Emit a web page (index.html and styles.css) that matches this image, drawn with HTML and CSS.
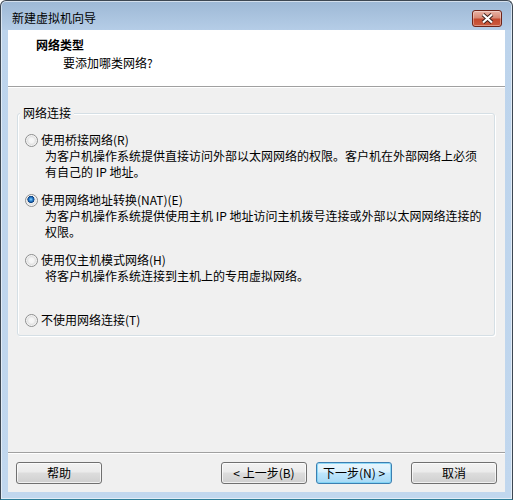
FILE: index.html
```html
<!DOCTYPE html>
<html lang="zh-CN">
<head>
<meta charset="utf-8">
<title>新建虚拟机向导</title>
<link rel="stylesheet" href="styles.css">
</head>
<body>
<div class="window">
  <div class="titlebar">
    <span class="title">新建虚拟机向导</span>
    <span class="close" role="button" aria-label="关闭">
      <svg width="13" height="11" viewBox="0 0 13 11">
        <path d="M2 1.5 L11 9.5 M11 1.5 L2 9.5" stroke="#3b1f1a" stroke-width="4" fill="none"/>
        <path d="M2 1.5 L11 9.5 M11 1.5 L2 9.5" stroke="#ffffff" stroke-width="2.2" fill="none"/>
      </svg>
    </span>
  </div>
  <div class="client">
    <div class="header">
      <div class="h-title">网络类型</div>
      <div class="h-sub">要添加哪类网络?</div>
    </div>
    <div class="body">
      <fieldset class="group">
        <legend>网络连接</legend>
        <div class="options">
          <div class="opt">
            <div class="opt-label"><span class="radio"></span>使用桥接网络(R)</div>
            <div class="desc">为客户机操作系统提供直接访问外部以太网网络的权限。客户机在外部网络上必须<br>有自己的 IP 地址。</div>
          </div>
          <div class="opt">
            <div class="opt-label"><span class="radio checked"></span>使用网络地址转换(NAT)(E)</div>
            <div class="desc">为客户机操作系统提供使用主机 IP 地址访问主机拨号连接或外部以太网网络连接的<br>权限。</div>
          </div>
          <div class="opt">
            <div class="opt-label"><span class="radio"></span>使用仅主机模式网络(H)</div>
            <div class="desc">将客户机操作系统连接到主机上的专用虚拟网络。</div>
          </div>
          <div class="opt">
            <div class="opt-label"><span class="radio"></span>不使用网络连接(T)</div>
          </div>
        </div>
      </fieldset>
    </div>
    <div class="footer">
      <span class="btn">帮助</span>
      <span class="btn btn-back">&lt; 上一步(B)</span>
      <span class="btn btn-next">下一步(N) &gt;</span>
      <span class="btn btn-cancel">取消</span>
    </div>
  </div>
</div>
</body>
</html>
```
FILE: styles.css
```css
* { box-sizing: border-box; }
html, body { margin: 0; padding: 0; }
body {
  width: 513px;
  height: 500px;
  overflow: hidden;
  font-family: "Noto Sans CJK SC", "Noto Sans", sans-serif;
  font-size: 12px;
  color: #000;
  background: #fff;
}
.window {
  width: 513px;
  height: 500px;
  display: flex;
  flex-direction: column;
  padding: 0 7px 7px;
  border: 1px solid #3d4752;
  border-bottom-color: #2f7f9a;
  border-radius: 6px 6px 0 0;
  background: linear-gradient(#9db8d5, #b5cde7 29px, #bdd4ec 29px, #c1d7ee);
  box-shadow: inset 0 0 0 1px rgba(255, 255, 255, 0.55);
}
.titlebar {
  height: 29px;
  display: flex;
  align-items: flex-start;
}
.title {
  margin: 10px 0 0 4px;
  line-height: 14px;
}
.close {
  margin: 9px 3px 0 auto;
  width: 30px;
  height: 17px;
  border: 1px solid #6e2419;
  border-radius: 3px;
  background: linear-gradient(#e9b4a6, #d88a76 45%, #c4492e 55%, #cc5c3f);
  box-shadow: inset 0 0 0 1px rgba(255, 255, 255, 0.35);
  display: flex;
  align-items: center;
  justify-content: center;
}
.close svg { display: block; }
.client {
  flex: 1;
  display: flex;
  flex-direction: column;
  background: #f0f0f0;
}
.header {
  height: 57px;
  background: #fff;
  border-bottom: 1px solid #a0a0a0;
  padding: 7px 0 0 28px;
}
.h-title {
  font-weight: bold;
  line-height: 16px;
}
.h-sub {
  margin-top: 2px;
  padding-left: 27px;
  line-height: 16px;
}
.body {
  flex: 1;
  border-top: 1px solid #fff;
  padding: 18px 10px 0 9px;
}
.group {
  margin: 0;
  min-width: 0;
  padding: 12px 0 7px 0;
  border: 1px solid #d5dfe5;
  border-radius: 3px;
  box-shadow: inset 1px 1px 0 #fff, 1px 1px 0 #fff;
}
.group legend {
  margin-left: 2px;
  padding: 0 3px;
  line-height: 14px;
  background: #f0f0f0;
}
.options {
  display: grid;
  grid-template-rows: repeat(3, 60px) auto;
  padding-left: 7px;
}
.opt-label {
  display: flex;
  align-items: center;
  gap: 3px;
  height: 16px;
  line-height: 16px;
  white-space: nowrap;
}
.desc {
  margin-left: 20px;
  line-height: 16px;
  white-space: nowrap;
}
.radio {
  flex: none;
  width: 13px;
  height: 13px;
  border-radius: 50%;
  border: 1px solid #8d8e8e;
  background: radial-gradient(circle at 50% 50%, #f8f8f8 0, #f4f4f4 2.5px, #e2e2e2 4px, #fbfbfb 5.5px);
}
.radio.checked {
  background:
    radial-gradient(circle at 45% 40%, #9ad8ff 0, #3d95dc 1.3px, #175ca8 2.6px, #0e3f7a 3.3px, rgba(14, 63, 122, 0) 3.8px),
    radial-gradient(circle at 50% 50%, #f8f8f8 0, #f4f4f4 2.5px, #e2e2e2 4px, #fbfbfb 5.5px);
}
.footer {
  height: 40px;
  display: flex;
  align-items: flex-start;
  border-top: 1px solid #a0a0a0;
  box-shadow: inset 0 1px 0 #fff;
  padding: 9px 8px 8px 8px;
}
.btn {
  width: 86px;
  height: 22px;
  display: flex;
  align-items: center;
  justify-content: center;
  line-height: 14px;
  white-space: nowrap;
  border: 1px solid #707070;
  border-radius: 3px;
  background: linear-gradient(#f2f2f2, #ebebeb 45%, #dddddd 50%, #cfcfcf);
  box-shadow: inset 0 0 0 1px rgba(255, 255, 255, 0.7);
}
.btn-back { margin-left: auto; }
.btn-next {
  width: 76px;
  margin-left: 9px;
  border-color: #3c7fb1;
  background: linear-gradient(#eaf6fd, #d9f0fc 45%, #bee6fd 50%, #a7d9f5);
  box-shadow: inset 0 0 0 1px rgba(120, 210, 245, 0.8);
}
.btn-cancel { margin-left: 19px; }
```
